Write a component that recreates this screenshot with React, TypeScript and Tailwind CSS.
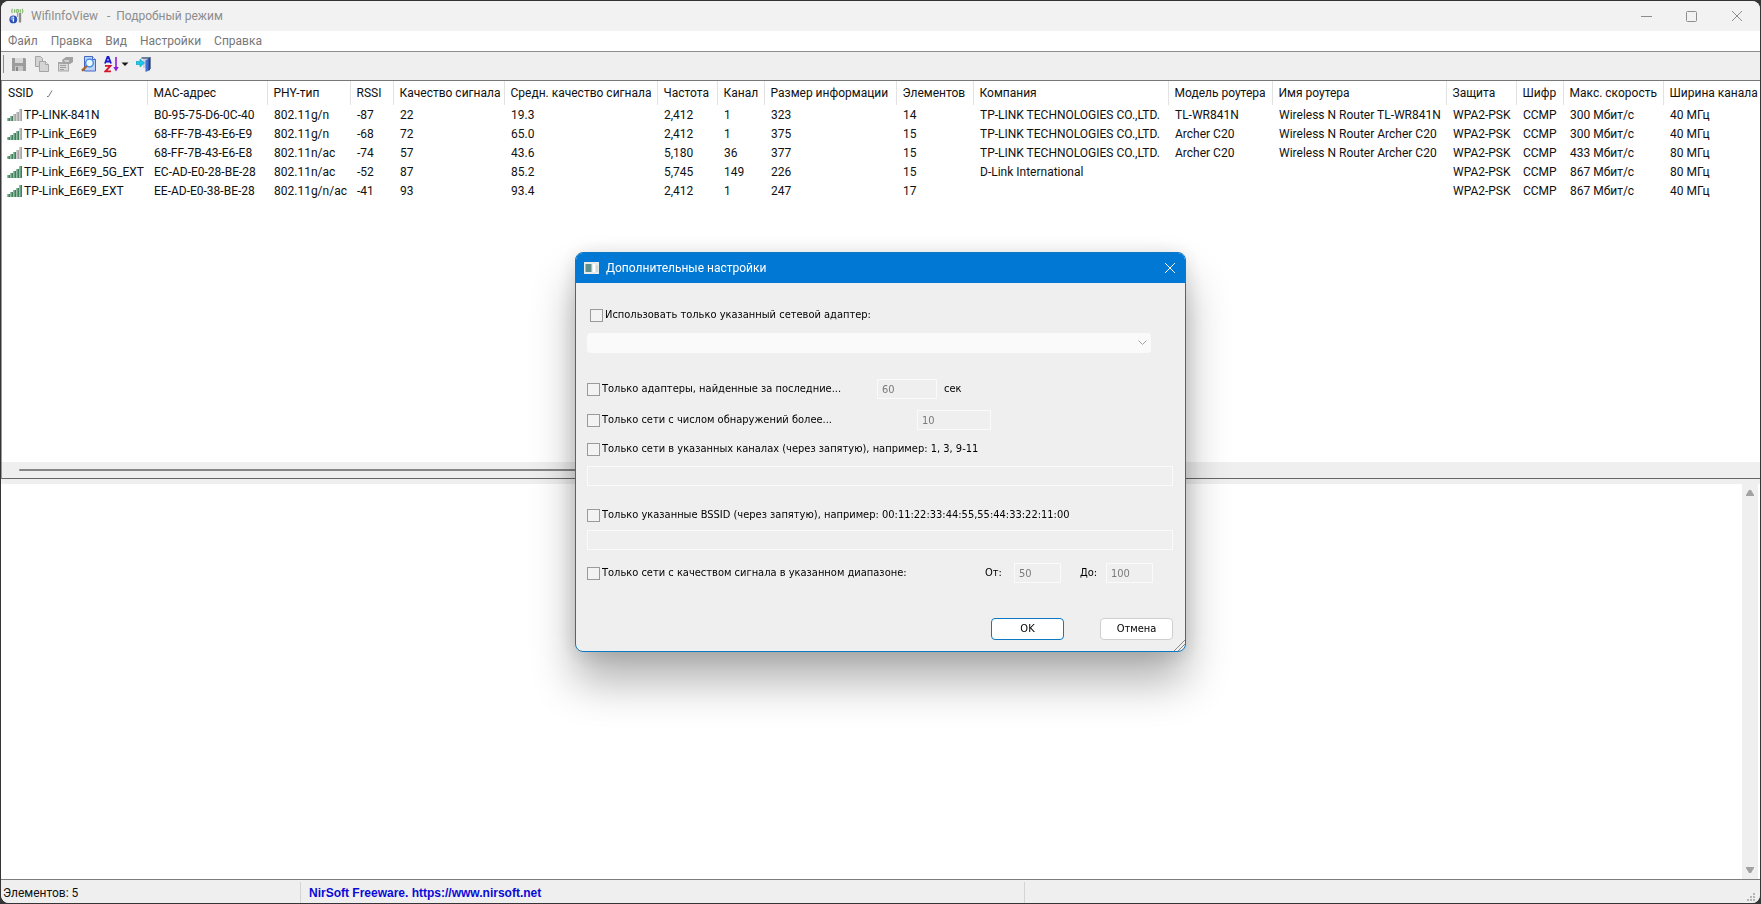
import { useState } from "react";
import type { ReactNode } from "react";

type Network = {
  ssid: string;
  bars: number;
  cells: string[];
};

const columns = [
  { title: "SSID", width: "w-[145px]" },
  { title: "MAC-адрес", width: "w-[120px]" },
  { title: "PHY-тип", width: "w-[83px]" },
  { title: "RSSI", width: "w-[43px]" },
  { title: "Качество сигнала", width: "w-[111px]" },
  { title: "Средн. качество сигнала", width: "w-[153px]" },
  { title: "Частота", width: "w-[60px]" },
  { title: "Канал", width: "w-[47px]" },
  { title: "Размер информации", width: "w-[132px]" },
  { title: "Элементов", width: "w-[77px]" },
  { title: "Компания", width: "w-[195px]" },
  { title: "Модель роутера", width: "w-[104px]" },
  { title: "Имя роутера", width: "w-[174px]" },
  { title: "Защита", width: "w-[70px]" },
  { title: "Шифр", width: "w-[47px]" },
  { title: "Макс. скорость", width: "w-[100px]" },
  { title: "Ширина канала", width: "" },
];

const networks: Network[] = [
  {
    ssid: "TP-LINK-841N",
    bars: 2,
    cells: ["B0-95-75-D6-0C-40", "802.11g/n", "-87", "22", "19.3", "2,412", "1", "323", "14", "TP-LINK TECHNOLOGIES CO.,LTD.", "TL-WR841N", "Wireless N Router TL-WR841N", "WPA2-PSK", "CCMP", "300 Мбит/с", "40 МГц"],
  },
  {
    ssid: "TP-Link_E6E9",
    bars: 4,
    cells: ["68-FF-7B-43-E6-E9", "802.11g/n", "-68", "72", "65.0", "2,412", "1", "375", "15", "TP-LINK TECHNOLOGIES CO.,LTD.", "Archer C20", "Wireless N Router Archer C20", "WPA2-PSK", "CCMP", "300 Мбит/с", "40 МГц"],
  },
  {
    ssid: "TP-Link_E6E9_5G",
    bars: 3,
    cells: ["68-FF-7B-43-E6-E8", "802.11n/ac", "-74", "57", "43.6", "5,180", "36", "377", "15", "TP-LINK TECHNOLOGIES CO.,LTD.", "Archer C20", "Wireless N Router Archer C20", "WPA2-PSK", "CCMP", "433 Мбит/с", "80 МГц"],
  },
  {
    ssid: "TP-Link_E6E9_5G_EXT",
    bars: 5,
    cells: ["EC-AD-E0-28-BE-28", "802.11n/ac", "-52", "87", "85.2", "5,745", "149", "226", "15", "D-Link International", "", "", "WPA2-PSK", "CCMP", "867 Мбит/с", "80 МГц"],
  },
  {
    ssid: "TP-Link_E6E9_EXT",
    bars: 5,
    cells: ["EE-AD-E0-38-BE-28", "802.11g/n/ac", "-41", "93", "93.4", "2,412", "1", "247", "17", "", "", "", "WPA2-PSK", "CCMP", "867 Мбит/с", "40 МГц"],
  },
];

const menu = ["Файл", "Правка", "Вид", "Настройки", "Справка"];

function SignalIcon({ bars }: { bars: number }) {
  return (
    <svg width="16" height="14" viewBox="0 0 16 14" className="shrink-0">
      {[3, 5, 7, 9, 12].map((h, i) => (
        <g key={h}>
          <rect x={i * 3 + 0.5} y={13 - h} width="2.5" height={h} fill={i < bars ? "#3f7f5c" : "#a4a4a4"} />
          <rect x={i * 3 + 0.5} y={13 - h} width="1" height={h} fill={i < bars ? "#8fc0a2" : "#d0d0d0"} />
        </g>
      ))}
    </svg>
  );
}

function AppIcon() {
  return (
    <svg width="16" height="16" viewBox="0 0 16 16">
      <g fill="none" stroke="#86b96c" strokeWidth="1.2">
        <path d="M3.400 .8Q2 3 3.400 5.200M5.800 1.400Q4.800 3 5.800 4.600M13.200 .8Q14.600 3 13.200 5.200M11 1.400Q12 3 11 4.600" />
        <circle cx="8.400" cy="3" r="1.300" />
      </g>
      <path d="M11 5v9.500" stroke="#8c8c8c" strokeWidth="2.400" />
      <path d="M8.500 5v4" stroke="#a5a5a5" strokeWidth="1.200" />
      <circle cx="4.300" cy="11.400" r="3.900" fill="#2c50b4" />
      <circle cx="3.400" cy="10.200" r="2" fill="#6f93e0" />
      <path d="M4.400 8.800v1.200M4.400 10.800v3" stroke="#fff" strokeWidth="1.300" />
    </svg>
  );
}

function SaveIcon() {
  return (
    <svg width="16" height="16" viewBox="0 0 16 16">
      <path d="M1 2h13l1 1v12H1z" fill="#9c9c9c" />
      <path d="M4 2h8v5H4z" fill="#d9d9d9" />
      <path d="M4 10h8v5H4z" fill="#c6c6c6" />
      <path d="M5 11h2v4H5z" fill="#888" />
    </svg>
  );
}

function CopyIcon() {
  return (
    <svg width="16" height="16" viewBox="0 0 16 16" fill="#d4d4d4" stroke="#a4a4a4">
      <path d="M1.500 .5h5l2 2v8h-7z" />
      <path d="M5.500 5.500h6l3 3v7h-9z" />
      <path d="M11.500 5.500v3h3" fill="#eee" />
    </svg>
  );
}

function PropertiesIcon() {
  return (
    <svg width="17" height="16" viewBox="0 0 17 16">
      <path d="M1 6h11v9.500H1z" fill="#a8a8a8" />
      <path d="M2 8h9v6.500H2z" fill="#d8d8d8" />
      <path d="M3 9.500h6M3 11.500h6M3 13.500h4" stroke="#a0a0a0" />
      <path d="M5 4l4-3h7v5l-3 2H9L6 7z" fill="#a2a2a2" />
      <path d="M7 4h5v2H8z" fill="#d2d2d2" />
    </svg>
  );
}

function FindIcon() {
  return (
    <svg width="16" height="16" viewBox="0 0 16 16">
      <path d="M3.500 .5h8l3 3v11.500h-11z" fill="#b9d3fb" stroke="#4466c4" />
      <path d="M11.500 .5v3h3" fill="#e8f1ff" stroke="#4466c4" />
      <circle cx="8.500" cy="7" r="3.800" fill="#e6f7ff" stroke="#3b83d8" strokeWidth="1.300" />
      <path d="M5.600 10L1 14.800" stroke="#a8662a" strokeWidth="2.400" />
    </svg>
  );
}

function SortIcon() {
  return (
    <svg width="25" height="17" viewBox="0 0 25 17" fill="none">
      <path d="M1 7.500L3.500 1h1L7 7.500M2 5.500h4" stroke="#1b1bd0" strokeWidth="1.800" />
      <path d="M1 9.800h5.500L1.500 15.300H7" stroke="#d3182c" strokeWidth="1.800" />
      <path d="M12 1v13" stroke="#8a1be0" strokeWidth="1.600" />
      <path d="M9.300 11h5.400L12 15.500z" fill="#8a1be0" />
      <path d="M17.500 6.500h7L21 10z" fill="#1a1a1a" />
    </svg>
  );
}

function ExitIcon() {
  return (
    <svg width="16" height="16" viewBox="0 0 16 16">
      <path d="M5.500 1h9.500v12h-2V3H5.500z" fill="#6f7f9c" />
      <path d="M7 3h4v9H7z" fill="#c9d2e2" />
      <path d="M9.500 4.500L14 1.500v12.500L9.500 16z" fill="#3d6fd8" />
      <path d="M12.500 2.500L14 1.500v12.500l-1.500.6z" fill="#2a3f7a" />
      <path d="M0 5.500h4V3l4.500 4L4 11V8.500H0z" fill="#1cc8ea" stroke="#1593b8" strokeWidth=".6" />
    </svg>
  );
}

function ToolButton({ label, children, disabled }: { label: string; children: ReactNode; disabled?: boolean }) {
  return (
    <button type="button" aria-label={label} disabled={disabled} className="flex items-center">
      {children}
    </button>
  );
}

function CloseGlyph() {
  return (
    <svg width="12" height="12" viewBox="0 0 12 12" stroke="currentColor" fill="none">
      <path d="M1 1l10 10M11 1L1 11" />
    </svg>
  );
}

function TitleBar() {
  return (
    <header className="flex h-[30px] shrink-0 items-center bg-[#f2f2f2] pl-2 pr-[17px] text-[#8d8d8d]">
      <AppIcon />
      <h1 className="ml-1.5 whitespace-pre text-xs">WifiInfoView   -  Подробный режим</h1>
      <div className="ml-auto flex items-center gap-[34px]">
        <button type="button" aria-label="Свернуть">
          <svg width="11" height="11" viewBox="0 0 11 11" stroke="currentColor">
            <path d="M0 5.500h11" />
          </svg>
        </button>
        <button type="button" aria-label="Развернуть">
          <svg width="11" height="11" viewBox="0 0 11 11" stroke="currentColor" fill="none">
            <rect x=".5" y=".5" width="10" height="10" rx="1" />
          </svg>
        </button>
        <button type="button" aria-label="Закрыть">
          <CloseGlyph />
        </button>
      </div>
    </header>
  );
}

function Toolbar() {
  return (
    <div className="flex h-[29px] shrink-0 items-center border-b border-[#777] bg-[#efefef] pb-1 pl-0.5">
      <span className="mr-[7px] h-[18px] w-px bg-[#8a8a8a]" />
      <div className="flex items-center gap-[7px]">
        <ToolButton label="Сохранить" disabled>
          <SaveIcon />
        </ToolButton>
        <ToolButton label="Копировать" disabled>
          <CopyIcon />
        </ToolButton>
        <ToolButton label="Свойства" disabled>
          <PropertiesIcon />
        </ToolButton>
        <ToolButton label="Найти">
          <FindIcon />
        </ToolButton>
        <ToolButton label="Сортировка">
          <SortIcon />
        </ToolButton>
        <ToolButton label="Выход">
          <ExitIcon />
        </ToolButton>
      </div>
    </div>
  );
}

function NetworkTable() {
  return (
    <table className="w-full table-fixed border-collapse whitespace-nowrap text-left text-xs text-[#111]">
      <thead>
        <tr className="h-6">
          {columns.map((col, i) => (
            <th key={col.title} className={`border-r border-[#e2e2e2] py-0 pl-1.5 pr-0 font-normal last:border-r-0 ${col.width}`}>
              {col.title}
              {i === 0 && (
                <svg width="7" height="7" viewBox="0 0 7 7" className="ml-3.5 inline" stroke="#777" fill="none">
                  <path d="M0 6.500h1.500L5 .5" />
                </svg>
              )}
            </th>
          ))}
        </tr>
      </thead>
      <tbody>
        {networks.map((net) => (
          <tr key={net.ssid} className="h-[19px]">
            <td className="p-0">
              <span className="flex items-center gap-px pl-[5px]">
                <SignalIcon bars={net.bars} />
                {net.ssid}
              </span>
            </td>
            {net.cells.map((cell, i) => (
              <td key={i} className="py-0 pl-[7px] pr-0">
                {cell}
              </td>
            ))}
          </tr>
        ))}
      </tbody>
    </table>
  );
}

function StatusBar() {
  return (
    <footer className="flex h-6 shrink-0 items-stretch border-t border-[#7c7c7c] bg-[#efefef] pt-0.5 text-xs text-[#111]">
      <span className="flex w-[300px] items-center border-r border-[#d4d4d4] pl-0.5">Элементов: 5</span>
      <span className="flex w-[724px] items-center border-r border-[#d4d4d4] pl-2">
        <a href="https://www.nirsoft.net" className="font-['Liberation_Sans',sans-serif] font-bold text-[#0a0ad8]">
          NirSoft Freeware. https://www.nirsoft.net
        </a>
      </span>
      <svg width="10" height="10" viewBox="0 0 10 10" className="ml-auto mr-1 self-end" fill="#b4b4b4">
        <path d="M7 0h2v2H7zM4 3h2v2H4zM7 3h2v2H7zM1 6h2v2H1zM4 6h2v2H4zM7 6h2v2H7z" />
      </svg>
    </footer>
  );
}

function Check({ label, checked, onChange }: { label: string; checked: boolean; onChange: () => void }) {
  return (
    <label className="flex items-center gap-0.5">
      <input
        type="checkbox"
        checked={checked}
        onChange={onChange}
        className="size-[13px] shrink-0 appearance-none border border-[#9a9a9a] bg-[#f3f3f3] checked:bg-[#0078d4]"
      />
      {label}
    </label>
  );
}

function Field({ label, value = "", width = "w-full" }: { label: string; value?: string; width?: string }) {
  return (
    <input
      type="text"
      aria-label={label}
      defaultValue={value}
      disabled
      className={`block h-5 border border-[#fafafa] bg-transparent px-1 text-[#7a7a7a] ${width}`}
    />
  );
}

function SettingsDialog() {
  const [checks, setChecks] = useState([false, false, false, false, false, false]);
  const bind = (i: number) => ({
    checked: checks[i],
    onChange: () => setChecks(checks.map((c, n) => (n === i ? !c : c))),
  });

  return (
    <section
      role="dialog"
      aria-label="Дополнительные настройки"
      className="relative w-[611px] overflow-hidden rounded-lg border border-[#0f78c4] bg-[#efefef] font-['DejaVu_Sans_Condensed','Noto_Sans',sans-serif] text-[11px] text-black shadow-[0_30px_44px_rgba(0,0,0,0.3),0_2px_20px_rgba(0,0,0,0.14)]"
    >
      <div className="flex h-[30px] items-center bg-[#0078d4] pl-2 pr-[9px] text-white">
        <svg width="15" height="12" viewBox="0 0 15 12">
          <path d="M0 0h15v12H0z" fill="#e6ecec" />
          <path d="M1.500 2h6v8h-6z" fill="#5e8f8c" />
          <path d="M9 2h2v8H9z" fill="#fff" />
          <path d="M12 3h2v7h-2z" fill="#cfdcda" />
        </svg>
        <h2 className="ml-[7px] font-[Roboto,'Noto_Sans',sans-serif] text-xs">Дополнительные настройки</h2>
        <button type="button" aria-label="Закрыть" className="ml-auto">
          <CloseGlyph />
        </button>
      </div>

      <form className="pb-[11px] pl-[11px] pr-3 pt-[22px]" onSubmit={(e) => e.preventDefault()}>
        <div className="flex h-5 items-center pl-[3px]">
          <Check label="Использовать только указанный сетевой адаптер:" {...bind(0)} />
        </div>
        <div className="relative mr-[22px] mt-2">
          <select
            aria-label="Сетевой адаптер"
            disabled
            className="block h-5 w-full appearance-none rounded-sm bg-[#fafafa] opacity-100"
          />
          <svg width="9" height="6" viewBox="0 0 9 6" className="absolute right-1 top-[7px]" fill="none" stroke="#a0a0a0">
            <path d="M.5 .5l4 4 4-4" />
          </svg>
        </div>

        <div className="mt-[26px] flex h-5 items-center">
          <div className="w-[290px]">
            <Check label="Только адаптеры, найденные за последние..." {...bind(1)} />
          </div>
          <Field label="Секунды" value="60" width="w-[60px]" />
          <span className="ml-[7px]">сек</span>
        </div>

        <div className="mt-[11px] flex h-5 items-center">
          <div className="w-[330px]">
            <Check label="Только сети с числом обнаружений более..." {...bind(2)} />
          </div>
          <Field label="Число обнаружений" value="10" width="w-[74px]" />
        </div>

        <div className="mt-[9px] flex h-5 items-center">
          <Check label="Только сети в указанных каналах (через запятую), например: 1, 3, 9-11" {...bind(3)} />
        </div>
        <div className="mt-[7px]">
          <Field label="Каналы" />
        </div>

        <div className="mt-[19px] flex h-5 items-center">
          <Check label="Только указанные BSSID (через запятую), например: 00:11:22:33:44:55,55:44:33:22:11:00" {...bind(4)} />
        </div>
        <div className="mt-[5px]">
          <Field label="BSSID" />
        </div>

        <div className="mt-[13px] flex h-5 items-center">
          <div className="w-[398px]">
            <Check label="Только сети с качеством сигнала в указанном диапазоне:" {...bind(5)} />
          </div>
          <span className="w-[29px]">От:</span>
          <Field label="От" value="50" width="w-[47px]" />
          <span className="ml-[19px] w-[26px]">До:</span>
          <Field label="До" value="100" width="w-[47px]" />
        </div>

        <div className="mt-[35px] flex justify-end gap-9">
          <button type="submit" className="h-[22px] w-[73px] rounded border border-[#0f78c4] bg-white">
            OK
          </button>
          <button type="button" className="h-[22px] w-[73px] rounded border border-[#cfcfcf] bg-white">
            Отмена
          </button>
        </div>
      </form>
      <svg width="12" height="12" viewBox="0 0 12 12" className="absolute bottom-0 right-0" stroke="#8c8c8c">
        <path d="M1 12L12 1M5 12l7-7M9 12l3-3" />
      </svg>
    </section>
  );
}

export default function App() {
  return (
    <div className="h-screen bg-[#353538] p-px font-[Roboto,'Noto_Sans',sans-serif]">
      <div className="flex h-full flex-col overflow-hidden rounded-lg bg-[#efefef]">
        <TitleBar />
        <nav className="flex h-[21px] shrink-0 items-center gap-[13px] border-b border-[#8e8e8e] bg-white pl-[7px] text-xs text-[#777]">
          {menu.map((item) => (
            <button key={item} type="button">
              {item}
            </button>
          ))}
        </nav>
        <Toolbar />

        <main className="flex min-h-0 flex-1 flex-col bg-white">
          <div className="flex h-[398px] shrink-0 flex-col border-b border-[#666] border-l border-l-[#999]">
            <NetworkTable />
            <div className="mt-auto flex h-4 items-center bg-[#efefef] pl-[17px]">
              <span className="h-0.5 w-1/2 rounded bg-[#858585]" />
            </div>
          </div>
          <div className="h-[5px] shrink-0 bg-[#efefef]" />
          <div className="flex min-h-0 flex-1 justify-end">
            <div className="mr-0.5 flex w-4 flex-col items-center justify-between bg-[#efefef] py-1.5">
              <button type="button" aria-label="Вверх">
                <svg width="8" height="6" viewBox="0 0 8 6" fill="#a2a2a2" className="block">
                  <path d="M3 0h2l3 5v1H0V5z" />
                </svg>
              </button>
              <button type="button" aria-label="Вниз">
                <svg width="8" height="6" viewBox="0 0 8 6" fill="#a2a2a2" className="block">
                  <path d="M3 6h2l3-5V0H0v1z" />
                </svg>
              </button>
            </div>
          </div>
        </main>
        <StatusBar />
      </div>

      <div className="fixed inset-0 flex items-center justify-center">
        <SettingsDialog />
      </div>
    </div>
  );
}
